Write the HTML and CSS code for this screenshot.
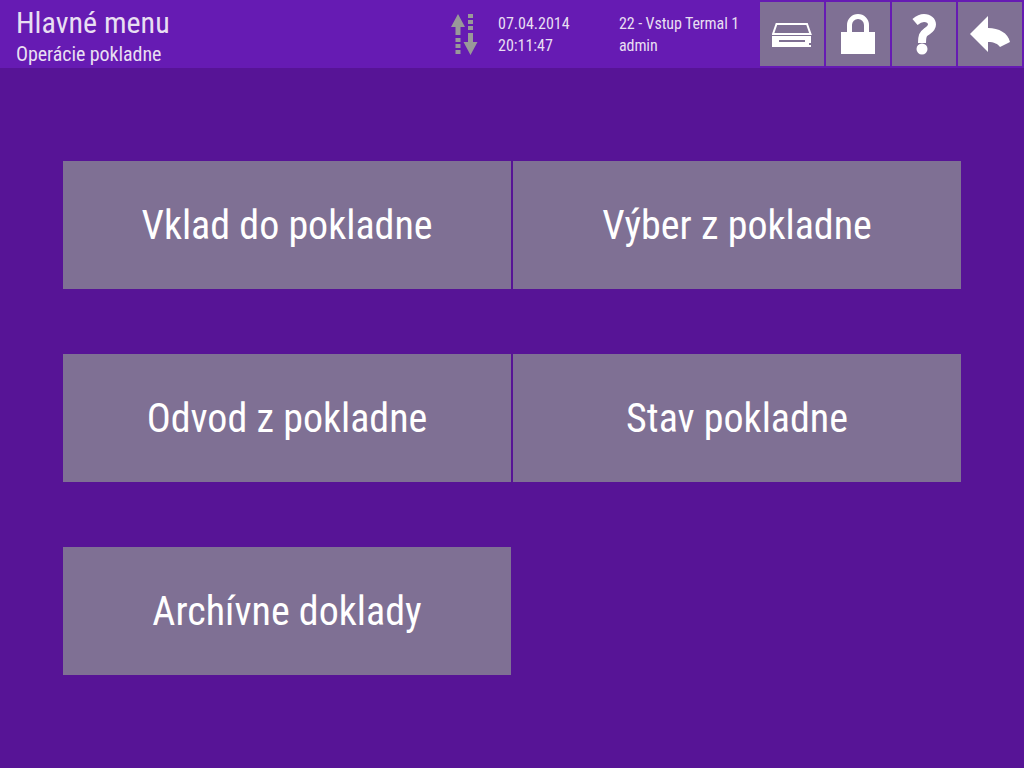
FILE: index.html
```html
<!DOCTYPE html>
<html lang="sk">
<head>
    <meta charset="UTF-8">
    <meta name="viewport" content="width=device-width, initial-scale=1.0">
    <title>Hlavné menu</title>
    <link rel="stylesheet" href="styles.css">
</head>
<body>

    <header class="topbar">
        <div class="titles">
            <div class="title">Hlavné menu</div>
            <div class="subtitle">Operácie pokladne</div>
        </div>

        <svg class="sync" width="28" height="42" viewBox="0 0 28 42">
            <path d="M1 14 L8 1 L15 14 L10.500 14 L10.500 22 L5.500 22 L5.500 14 Z" fill="#999999"/>
            <rect x="5.500" y="25" width="5" height="4" fill="#999999"/>
            <rect x="5.500" y="31" width="5" height="4" fill="#999999"/>
            <rect x="5.500" y="37" width="5" height="4" fill="#999999"/>
            <rect x="18" y="1" width="5" height="4" fill="#999999"/>
            <rect x="18" y="7" width="5" height="4" fill="#999999"/>
            <rect x="18" y="13" width="5" height="4" fill="#999999"/>
            <path d="M18 20 L23 20 L23 29 L27.500 29 L20.500 42 L13.500 29 L18 29 Z" fill="#999999"/>
        </svg>

        <div class="info info-date">
            <div>07.04.2014</div>
            <div>20:11:47</div>
        </div>
        <div class="info info-user">
            <div>22 - Vstup Termal 1</div>
            <div>admin</div>
        </div>

        <div class="tools">
            <button class="tool">
                <svg width="40" height="25" viewBox="0 0 40 25">
                    <path d="M1 12 L4.500 2 L35 2 L38.500 12 Z" fill="none" stroke="#fff" stroke-width="2"/>
                    <path d="M0 14 H39 V25 H0 Z M7 18 V20 H33 V18 Z M37 21 V23 H39 V21 Z" fill="#fff" fill-rule="evenodd"/>
                </svg>
            </button>
            <button class="tool">
                <svg width="34" height="40" viewBox="0 0 34 40">
                    <path d="M8.500 20 V11 A8.500 8.500 0 0 1 25.500 11 V20" fill="none" stroke="#fff" stroke-width="5"/>
                    <rect x="0" y="18" width="34" height="22" fill="#fff"/>
                </svg>
            </button>
            <button class="tool">
                <svg width="24" height="41" viewBox="0 0 24 41">
                    <path d="M3 8 C6 5.500 9 4 12 4 C17 4 20 7 20 10.500 C20 14.500 17 16 14 18 C11 20 10 22 10 29" fill="none" stroke="#fff" stroke-width="8"/>
                    <circle cx="10" cy="35" r="5.500" fill="#fff"/>
                </svg>
            </button>
            <button class="tool">
                <svg width="40" height="36" viewBox="0 0 40 36">
                    <path d="M0 18 L18 0 V12 C29 12 38 17 40 26 L30 31 C28 28 24 26 18 26 V36 Z" fill="#fff"/>
                </svg>
            </button>
        </div>
    </header>

    <main class="menu">
        <button class="menu-btn">Vklad do pokladne</button>
        <button class="menu-btn">Výber z pokladne</button>
        <button class="menu-btn">Odvod z pokladne</button>
        <button class="menu-btn">Stav pokladne</button>
        <button class="menu-btn">Archívne doklady</button>
    </main>

</body>
</html>
```

FILE: styles.css
```css
html, body {
    height: 100%;
}
body {
    margin: 0;
    background-color: #571496;
    font-family: "Roboto", "Liberation Sans", sans-serif;
    font-stretch: condensed;
    overflow: hidden;
}
.topbar {
    display: flex;
    align-items: center;
    height: 68px;
    background-color: #661bb3;
    color: #e8dff2;
}
.titles {
    width: 434px;
    padding-left: 16px;
}
.title {
    font-size: 30px;
    line-height: 36px;
    margin-top: 3px;
}
.subtitle {
    font-size: 20px;
    line-height: 26px;
    letter-spacing: -0.06px;
}
.sync {
    flex: none;
    margin-right: 20px;
}
.info {
    font-size: 16px;
    line-height: 22px;
    margin-top: 2px;
}
.info-date {
    width: 121px;
}
.info-user {
    width: 141px;
    letter-spacing: -0.1px;
}
.tools {
    display: flex;
    gap: 2px;
}
.tool {
    display: flex;
    align-items: center;
    justify-content: center;
    width: 64px;
    height: 64px;
    padding: 0;
    border: none;
    background-color: #7f7094;
}
.menu {
    display: grid;
    grid-template-columns: 448px 448px;
    grid-auto-rows: 128px;
    column-gap: 2px;
    row-gap: 65px;
    padding: 93px 0 0 63px;
}
.menu-btn {
    padding: 0;
    border: none;
    background-color: #7f7094;
    color: #ffffff;
    font-family: inherit;
    font-stretch: condensed;
    font-size: 40px;
}
```
